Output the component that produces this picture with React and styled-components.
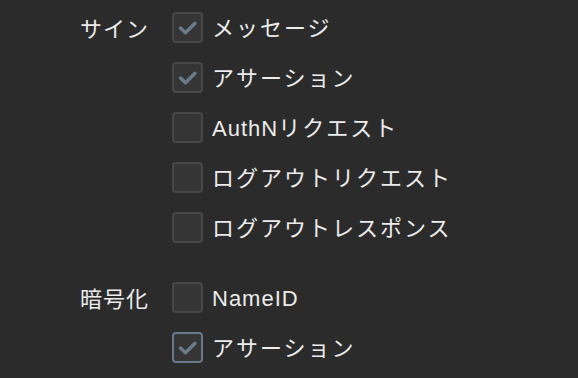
import React from 'react'
import styled, { createGlobalStyle } from 'styled-components'

const GlobalStyle = createGlobalStyle`
    html, body {
        margin: 0;
        padding: 0;
        background: #2b2b2b;
    }
    body {
        font-family: "Liberation Sans", "Noto Sans CJK JP", sans-serif;
        color: #ececec;
    }
`

const groups = [
    {
        title: 'サイン',
        items: [
            { label: 'メッセージ', checked: true },
            { label: 'アサーション', checked: true },
            { label: 'AuthNリクエスト', checked: false },
            { label: 'ログアウトリクエスト', checked: false },
            { label: 'ログアウトレスポンス', checked: false },
        ],
    },
    {
        title: '暗号化',
        items: [
            { label: 'NameID', checked: false },
            { label: 'アサーション', checked: true, focused: true },
        ],
    },
]

const Check = () => (
    <svg width="20" height="16" viewBox="0 0 20 16">
        <path d="M2.5 8 L7.5 12.8 L17 3.2" fill="none" stroke="#687c8b" strokeWidth="3.4" strokeLinecap="round" strokeLinejoin="round" />
    </svg>
)

// split a label into latin and japanese runs, they get different spacing
const splitRuns = (text) => text.match(/[A-Za-z0-9]+|[^A-Za-z0-9]+/g)

const App = () => {
    return (
        <Page>
            <GlobalStyle />
            {groups.map((g) => (
                <Group key={g.title}>
                    <Title>{g.title}</Title>
                    <List>
                        {g.items.map((it, i) => (
                            <Row key={i}>
                                <Box $focused={it.focused}>{it.checked && <Check />}</Box>
                                <Label>
                                    {splitRuns(it.label).map((run, j) =>
                                        /[A-Za-z]/.test(run)
                                            ? <Latin key={j}>{run}</Latin>
                                            : <span key={j}>{run}</span>
                                    )}
                                </Label>
                            </Row>
                        ))}
                    </List>
                </Group>
            ))}
        </Page>
    )
}

const Page = styled.div`
    width: 578px;
    height: 378px;
    overflow: hidden;
    box-sizing: border-box;
    padding: 12px 0 0 80px;
    display: flex;
    flex-direction: column;
    gap: 39px;
`

const Group = styled.div`
    display: flex;
    gap: 22px;
`

const Title = styled.div`
    width: 70px;
    height: 31px;
    padding-top: 2px;
    box-sizing: border-box;
    line-height: 31px;
    font-size: 22px;
    letter-spacing: 1px;
`

const List = styled.div`
    display: flex;
    flex-direction: column;
    gap: 19px;
`

const Row = styled.div`
    display: flex;
    align-items: center;
    gap: 9px;
    height: 31px;
`

const Box = styled.div`
    width: 31px;
    height: 31px;
    box-sizing: border-box;
    border-radius: 4px;
    background: #353535;
    border: 2px solid ${(p) => (p.$focused ? '#67798a' : '#474747')};
    display: flex;
    align-items: center;
    justify-content: center;
`

const Label = styled.div`
    font-size: 22px;
    line-height: 31px;
    padding-top: 2px;
    letter-spacing: 2px;
    white-space: nowrap;
`

const Latin = styled.span`
    letter-spacing: 1px;
`

export default App
